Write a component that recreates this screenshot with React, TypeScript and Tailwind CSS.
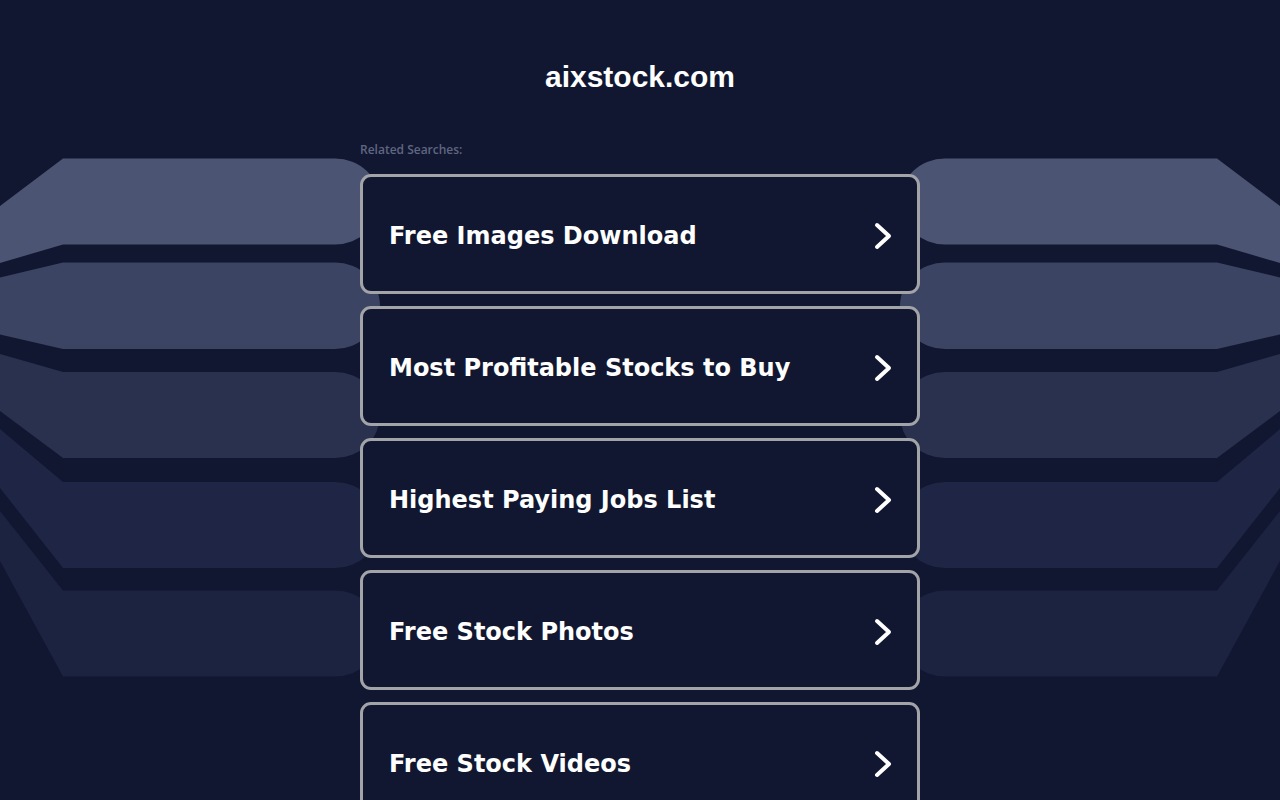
import React from "react";

// ── Data ──────────────────────────────────────────────────────────────────────

const SEARCHES = [
  "Free Images Download",
  "Most Profitable Stocks to Buy",
  "Highest Paying Jobs List",
  "Free Stock Photos",
  "Free Stock Videos",
];

// top, bottom (flat part), and y at x=0 for the slanted left ends
const BANDS = [
  { t: 158.5, b: 244.5, lt: 206, lb: 263, fill: "#4b5573" },
  { t: 262.5, b: 349, lt: 277.5, lb: 334.5, fill: "#3b4462" },
  { t: 372, b: 458, lt: 354, lb: 411, fill: "#29314e" },
  { t: 482, b: 568, lt: 429, lb: 488, fill: "#1e2545" },
  { t: 590.5, b: 676.5, lt: 511, lb: 561, fill: "#1c2341" },
];

// ── Background drawing ───────────────────────────────────────────────────────

function bandPath(t: number, b: number, lt: number, lb: number) {
  const r = (b - t) / 2;
  return `M0 ${lt} L63 ${t} L335 ${t} A45 ${r} 0 0 1 335 ${b} L63 ${b} L0 ${lb} Z`;
}

function Backdrop() {
  return (
    <svg
      className="absolute top-0 left-0 w-[1280px] h-[800px]"
      viewBox="0 0 1280 800"
      aria-hidden="true"
    >
      {BANDS.map((band, i) => (
        <g key={i} fill={band.fill}>
          <path d={bandPath(band.t, band.b, band.lt, band.lb)} />
          <path
            d={bandPath(band.t, band.b, band.lt, band.lb)}
            transform="translate(1280 0) scale(-1 1)"
          />
        </g>
      ))}
    </svg>
  );
}

// ── Chevron ──────────────────────────────────────────────────────────────────

function Chevron() {
  return (
    <svg width="22" height="30" viewBox="0 0 22 30" fill="none" className="shrink-0">
      <path
        d="M4 4 L16 15 L4 26"
        stroke="white"
        strokeWidth="4"
        strokeLinecap="round"
        strokeLinejoin="round"
      />
    </svg>
  );
}

// ── Main ─────────────────────────────────────────────────────────────────────

export default function App() {
  return (
    <div className="relative min-h-screen bg-[#111730] overflow-hidden">
      <Backdrop />
      <div className="relative mx-auto w-[560px] pt-[59px]">
        <h1 className="text-center text-[30px] leading-[36px] font-bold text-white font-['Liberation_Sans',Arial,sans-serif]">
          aixstock.com
        </h1>
        <p className="mt-[47px] text-[12px] leading-[16px] font-semibold text-[#5f6682] font-['Open_Sans','Roboto',sans-serif]">
          Related Searches:
        </p>
        <div className="mt-[16px] flex flex-col gap-[12px]">
          {SEARCHES.map(s => (
            <a
              key={s}
              href="#"
              className="flex h-[120px] items-center justify-between rounded-[11px] border-[3px] border-[#a3a4a8] bg-[#111730] pt-[4px] pl-[26px] pr-[22px]"
            >
              <span className="text-[24px] font-bold text-white font-['DejaVu_Sans',Verdana,sans-serif]">
                {s}
              </span>
              <Chevron />
            </a>
          ))}
        </div>
      </div>
    </div>
  );
}
